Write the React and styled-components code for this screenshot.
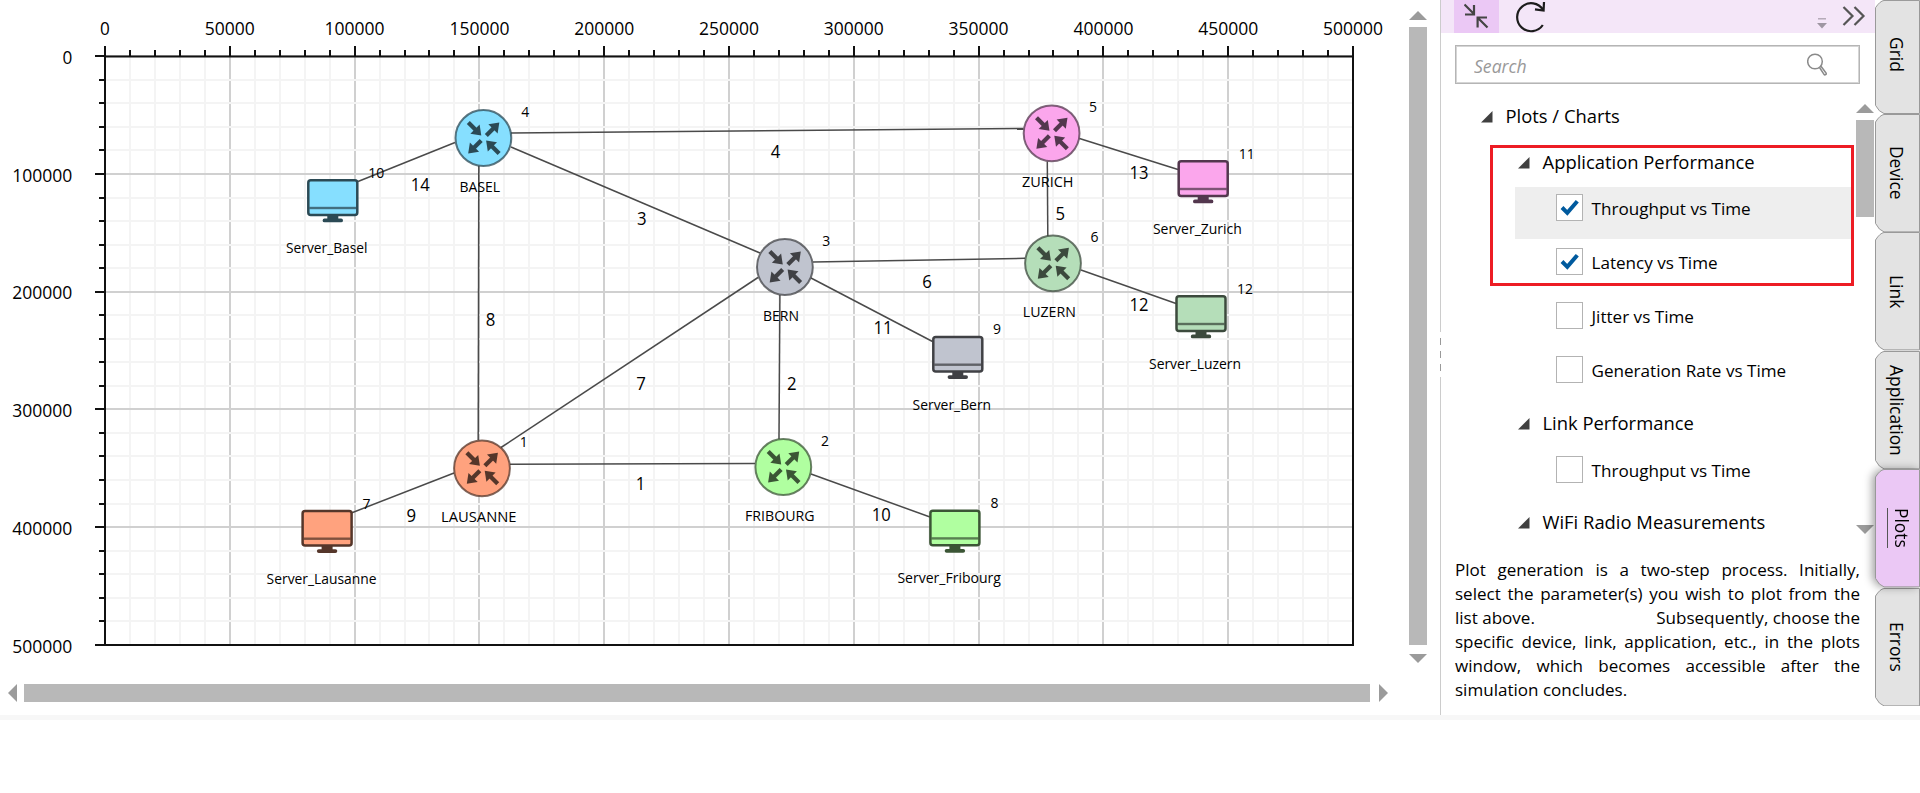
import { useState } from 'react';
import styled, { createGlobalStyle } from 'styled-components';

const GRID = { left: 105, top: 56.5, right: 1353, bottom: 645 };

const ROUTERS = [
  { name: 'BASEL', id: 4, x: 483.4, y: 138, color: '#86dfff', dark: '#2b4a55', label: [459.6, 192, 40.5], idPos: [525.3, 116.7] },
  { name: 'ZURICH', id: 5, x: 1051.6, y: 133.3, color: '#fba6ec', dark: '#53374e', label: [1022, 186.7, 51.5], idPos: [1093, 111.7] },
  { name: 'BERN', id: 3, x: 784.9, y: 267, color: '#c0c4cf', dark: '#404145', label: [763, 321, 36], idPos: [826.3, 245.7] },
  { name: 'LUZERN', id: 6, x: 1053, y: 263.3, color: '#b5deb9', dark: '#3c4a3d', label: [1022.8, 316.5, 53], idPos: [1094.5, 241.7] },
  { name: 'LAUSANNE', id: 1, x: 482, y: 468.3, color: '#ffa27e', dark: '#55362a', label: [441, 522, 75.5], idPos: [523.7, 446.7] },
  { name: 'FRIBOURG', id: 2, x: 783.3, y: 467, color: '#b0ffa0', dark: '#3b5535', label: [745, 521, 69.5], idPos: [825, 446] },
];

const SERVERS = [
  { name: 'Server_Basel', id: 10, x: 307.3, y: 179.3, color: '#86dfff', dark: '#2b4a55', label: [286, 253.3, 81.5], idPos: [376.3, 178] },
  { name: 'Server_Zurich', id: 11, x: 1177.7, y: 160.3, color: '#fba6ec', dark: '#53374e', label: [1152.9, 234.3, 89], idPos: [1246.8, 158.7] },
  { name: 'Server_Luzern', id: 12, x: 1175.5, y: 295.3, color: '#b5deb9', dark: '#3c4a3d', label: [1149, 369.3, 92], idPos: [1245, 293.5] },
  { name: 'Server_Bern', id: 9, x: 932.3, y: 336, color: '#c0c4cf', dark: '#404145', label: [912.6, 410, 78.5], idPos: [997, 334.3] },
  { name: 'Server_Lausanne', id: 7, x: 301.6, y: 510, color: '#ffa27e', dark: '#55362a', label: [266.6, 584.3, 110], idPos: [366.5, 508.7] },
  { name: 'Server_Fribourg', id: 8, x: 929.4, y: 509.7, color: '#b0ffa0', dark: '#3b5535', label: [897.4, 583, 103.6], idPos: [994.6, 507.7] },
];

const LINKS = [
  { id: 14, line: [455, 142.5, 358, 181.5], at: [420.3, 191] },
  { id: 4, line: [511, 133, 1023.5, 128.5], at: [775.5, 158] },
  { id: 3, line: [511, 147, 760, 253], at: [641.8, 225] },
  { id: 8, line: [478.8, 166, 478.2, 440], at: [490.6, 325.7] },
  { id: 7, line: [501, 447.5, 758, 277.5], at: [641, 389.7] },
  { id: 1, line: [510, 464.3, 755, 463.5], at: [640.6, 489.7] },
  { id: 9, line: [454, 473, 352, 512.7], at: [411.4, 521.7] },
  { id: 2, line: [779.9, 295, 779, 439], at: [791.8, 390] },
  { id: 6, line: [813, 262, 1025, 258.3], at: [927, 288] },
  { id: 11, line: [811, 278, 932.5, 341.5], at: [883, 334.3] },
  { id: 10, line: [811, 474, 930, 517], at: [881.2, 521] },
  { id: 12, line: [1081, 270, 1176, 303.5], at: [1139, 311.3] },
  { id: 13, line: [1079.5, 138.5, 1178, 169.5], at: [1139, 178.7] },
  { id: 5, line: [1047.3, 161.5, 1047.8, 236], at: [1060.3, 220.3] },
];

const TABS = ['Grid', 'Device', 'Link', 'Application', 'Plots', 'Errors'];

const range = (n) => Array.from({ length: n }, (_, i) => i);

function GridLines() {
  const dx = (GRID.right - GRID.left) / 50;
  const dy = (GRID.bottom - GRID.top) / 25;
  const xs = range(51).map((i) => ({ i, p: Math.round(GRID.left + i * dx), major: i % 5 === 0 }));
  const ys = range(26).map((i) => ({ i, p: Math.floor(GRID.top + i * dy + 0.3), major: i % 5 === 0 }));
  const byWeight = (a, b) => a.major - b.major;

  return (
    <g>
      {[...xs].sort(byWeight).map(({ i, p, major }) => (
        <line key={`x${i}`} x1={p} x2={p} y1={GRID.top} y2={GRID.bottom} stroke={major ? '#d0d0d0' : '#f4f4f4'} strokeWidth="2" />
      ))}
      {[...ys].sort(byWeight).map(({ i, p, major }) => (
        <line key={`y${i}`} x1={GRID.left} x2={GRID.right} y1={p} y2={p} stroke={major ? '#d0d0d0' : '#f4f4f4'} strokeWidth="2" />
      ))}
      {xs.map(({ i, p, major }) => (
        <line key={`tx${i}`} x1={p} x2={p} y1={major ? 46 : 50} y2={56} stroke="#111" strokeWidth="2" />
      ))}
      {ys.map(({ i, p, major }) => (
        <line key={`ty${i}`} x1={major ? 95 : 99} x2={104} y1={p} y2={p} stroke="#111" strokeWidth="2" />
      ))}
      <rect x={GRID.left} y={GRID.top} width={GRID.right - GRID.left} height={GRID.bottom - GRID.top} fill="none" stroke="#111" strokeWidth="2" />
      {range(11).map((i) => (
        <AxisText key={i} x={GRID.left + i * 124.8} y="34.7" textAnchor="middle" textLength={i === 0 ? 9.8 : i === 1 ? 50 : 60} lengthAdjust="spacingAndGlyphs">
          {i * 50000}
        </AxisText>
      ))}
      {range(6).map((i) => (
        <AxisText key={i} x="72.3" y={63.7 + i * 117.8} textAnchor="end" textLength={i === 0 ? 9.8 : 60} lengthAdjust="spacingAndGlyphs">
          {i * 100000}
        </AxisText>
      ))}
    </g>
  );
}

function Arrow({ x, y, turn }) {
  return (
    <g transform={`translate(${x} ${y}) rotate(${turn})`}>
      <path d="M.3 .3 L-1.4 -10.6 L-10.6 -1.4 Z" />
      <path d="M-11.2 -14.2 L-3.2 -6.2 L-6.2 -3.2 L-14.2 -11.2 Z" />
    </g>
  );
}

function Router({ x, y, color, dark }) {
  return (
    <g transform={`translate(${x} ${y})`}>
      <circle r="27.9" fill={color} stroke={dark} strokeOpacity="0.75" strokeWidth="2" />
      <g fill={dark}>
        <Arrow x={-2.4} y={-2.8} turn={0} />
        <Arrow x={15.6} y={-15.2} turn={-90} />
        <Arrow x={-14.9} y={15.2} turn={90} />
        <Arrow x={3} y={2.8} turn={180} />
      </g>
    </g>
  );
}

function Monitor({ x, y, color, dark }) {
  return (
    <g transform={`translate(${x} ${y})`}>
      <rect x="1" y="1" width="49" height="34.6" rx="2.5" fill={color} stroke={dark} strokeWidth="2.5" />
      <rect x="2" y="27.5" width="47" height="2.4" fill={dark} opacity="0.75" />
      <path d="M20 36 H31 V39.2 H33.8 A1.9 1.9 0 0 1 33.8 43 H17.2 A1.9 1.9 0 0 1 17.2 39.2 H20 Z" fill={dark} />
    </g>
  );
}

function NodeLabels({ name, id, label, idPos }) {
  return (
    <g>
      <NodeText x={label[0]} y={label[1]} textLength={label[2]} lengthAdjust="spacingAndGlyphs">{name}</NodeText>
      <NodeText x={idPos[0]} y={idPos[1]} textAnchor="middle" textLength={id > 9 ? 16 : 8} lengthAdjust="spacingAndGlyphs">{id}</NodeText>
    </g>
  );
}

function Topology() {
  return (
    <Diagram width="1409" height="684" viewBox="0 0 1409 684">
      <GridLines />
      {LINKS.map(({ id, line }) => (
        <line key={id} x1={line[0]} y1={line[1]} x2={line[2]} y2={line[3]} stroke="#4a4a4a" strokeWidth="1.5" />
      ))}
      {LINKS.map(({ id, at }) => (
        <LinkText key={id} x={at[0]} y={at[1]} textAnchor="middle" textLength={id > 9 ? 19 : 9.6} lengthAdjust="spacingAndGlyphs">{id}</LinkText>
      ))}
      {ROUTERS.map((node) => <Router key={node.id} {...node} />)}
      {SERVERS.map((node) => <Monitor key={node.id} {...node} />)}
      {[...ROUTERS, ...SERVERS].map((node) => <NodeLabels key={node.id} {...node} />)}
    </Diagram>
  );
}

function Leaf({ label, checked, selected }) {
  const [isChecked, setIsChecked] = useState(Boolean(checked));

  return (
    <LeafRow $selected={selected}>
      <CheckBox type="button" onClick={() => setIsChecked(!isChecked)}>
        {isChecked && (
          <svg width="20" height="18" viewBox="0 0 20 18">
            <path d="M2 8.5 L7.3 13.8 L17.3 2.2" fill="none" stroke="#005a9e" strokeWidth="4" />
          </svg>
        )}
      </CheckBox>
      <LeafText>{label}</LeafText>
    </LeafRow>
  );
}

function Heading({ label, height, top, root }) {
  return (
    <HeadingRow $height={height} $top={top} $root={root}>
      <Expander width="12" height="12" viewBox="0 0 12 12">
        <path d="M11.5 0 V11.5 H0 Z" fill="#404040" />
      </Expander>
      {label}
    </HeadingRow>
  );
}

function ArrowHead({ dir }) {
  const points = { up: '0,9 9,0 18,9', down: '0,0 9,9 18,0', left: '9,0 0,9 9,18', right: '0,0 9,9 0,18' }[dir];
  const vertical = dir === 'up' || dir === 'down';
  return (
    <svg width={vertical ? 18 : 9} height={vertical ? 9 : 18}>
      <polygon points={points} fill="#9b9b9b" />
    </svg>
  );
}

export default function App() {
  const [active, setActive] = useState('Plots');

  return (
    <>
      <GlobalStyle />
      <Workspace>
        <CanvasPane>
          <CanvasRow>
            <Topology />
            <VerticalBar>
              <ArrowHead dir="up" />
              <Thumb />
              <ArrowHead dir="down" />
            </VerticalBar>
          </CanvasRow>
          <HorizontalBar>
            <ArrowHead dir="left" />
            <Thumb />
            <ArrowHead dir="right" />
          </HorizontalBar>
        </CanvasPane>
        <Splitter>
          <SplitLine $height={332} />
          <Grip />
          <Grip />
          <Grip />
          <SplitLine />
        </Splitter>
        <Panel>
          <Toolbar>
            <ToolButton $active>
              <svg width="25" height="26" viewBox="0 0 25 26" fill="none" stroke="#444" strokeWidth="2.2">
                <path d="M.5 1.5 L10 11 M10 2 V11.5 H1" />
                <path d="M23.5 24.5 L14 15 M13.6 24.5 V14.5 H23" />
              </svg>
            </ToolButton>
            <ToolButton>
              <svg width="30" height="32" viewBox="0 0 30 32" fill="none" stroke="#1c1c1c" strokeWidth="2.2">
                <path d="M26.8 24 A14 14 0 1 1 27 8.8" />
                <path d="M19 8.4 L27.6 9.6 L28 1" />
              </svg>
            </ToolButton>
            <ToolbarEnd>
              <svg width="10" height="11" viewBox="0 0 10 11">
                <path d="M1 .8 H9" stroke="#aaa1ae" strokeWidth="1.3" />
                <path d="M0 5 H10 L5 10.5 Z" fill="#9e96a2" />
              </svg>
              <svg width="24" height="20" viewBox="0 0 24 20" fill="none" stroke="#555" strokeWidth="2.2">
                <path d="M1.5 1 L10.5 10 L1.5 19 M12.5 1 L21.5 10 L12.5 19" />
              </svg>
            </ToolbarEnd>
          </Toolbar>
          <SearchBox>
            <SearchInput placeholder="Search" />
            <svg width="20" height="24" viewBox="0 0 20 24" fill="none" stroke="#8a8a8a">
              <circle cx="8" cy="8.5" r="7.3" strokeWidth="1.5" />
              <path d="M12.5 14.5 L17 21.3 A1 1 0 0 0 19 20 L14 13.3" strokeWidth="1.5" />
            </svg>
          </SearchBox>
          <TreeArea>
            <Tree>
              <Heading root label="Plots / Charts" height={46} top={11} />
              <Marked>
                <Heading label="Application Performance" height={48} top={11} />
                <Leaf label="Throughput vs Time" checked selected />
                <Leaf label="Latency vs Time" checked />
              </Marked>
              <Leaf label="Jitter vs Time" />
              <Leaf label="Generation Rate vs Time" />
              <Heading label="Link Performance" height={46} top={8} />
              <Leaf label="Throughput vs Time" />
              <Heading label="WiFi Radio Measurements" height={38} top={7} />
            </Tree>
            <TreeBar>
              <ArrowHead dir="up" />
              <TreeThumb />
              <ArrowHead dir="down" />
            </TreeBar>
          </TreeArea>
          <Help>
            <HelpLine>Plot generation is a two-step process. Initially,</HelpLine>
            <HelpLine>select the parameter(s) you wish to plot from the</HelpLine>
            <HelpLine $split>
              <span>list above.</span>
              <span>Subsequently, choose the</span>
            </HelpLine>
            <HelpLine>specific device, link, application, etc., in the plots</HelpLine>
            <HelpLine>window, which becomes accessible after the</HelpLine>
            <HelpLine $last>simulation concludes.</HelpLine>
          </Help>
        </Panel>
        <TabStrip>
          {TABS.map((tab) => (
            <Tab key={tab} $active={tab === active} $first={tab === 'Grid'} onClick={() => setActive(tab)}>
              <TabShape viewBox="0 0 45 118" preserveAspectRatio="none">
                <path d="M44.5 .5 H9 Q5 1 .5 8 V109 Q4 116 9 117.5 H44.5 Z" />
              </TabShape>
              <TabText $active={tab === active} $first={tab === 'Grid'}>{tab}</TabText>
            </Tab>
          ))}
        </TabStrip>
      </Workspace>
      <StatusEdge />
    </>
  );
}

const GlobalStyle = createGlobalStyle`
  *,
  *::after {
    box-sizing: border-box;
  }

  body {
    margin: 0;
    background: #fff;
    color: #000;
    font-family: 'Open Sans', 'Noto Sans', sans-serif;
    overflow: hidden;
  }

  svg {
    display: block;
    flex-shrink: 0;
  }
`;

const Workspace = styled.div`
  display: flex;
  width: 1920px;
  height: 715px;
`;

const CanvasPane = styled.main`
  display: flex;
  flex-direction: column;
  width: 1440px;
`;

const CanvasRow = styled.div`
  display: flex;
  height: 684px;
`;

const Diagram = styled.svg`
  width: 1409px;
  height: 684px;
`;

const AxisText = styled.text`
  font-size: 17.6px;
  fill: #000;
`;

const LinkText = styled.text`
  font-size: 17.4px;
  fill: #000;
`;

const NodeText = styled.text`
  font-size: 15.2px;
  fill: #000;
`;

const VerticalBar = styled.div`
  display: flex;
  flex-direction: column;
  width: 18px;
  height: 663px;
  padding-top: 11px;
`;

const HorizontalBar = styled.div`
  display: flex;
  width: 1388px;
  height: 18px;
  padding-left: 8px;
`;

const Thumb = styled.div`
  flex: 1;
  background: #b8b8b8;

  ${VerticalBar} & {
    margin: 7px 0 9px;
  }

  ${HorizontalBar} & {
    margin: 0 9px 0 7px;
  }
`;

const Splitter = styled.div`
  display: flex;
  flex-direction: column;
  gap: 6px;
  width: 1px;
`;

const SplitLine = styled.div`
  ${({ $height }) => ($height ? `height: ${$height}px;` : 'flex: 1;')}
  background: #ccc;
`;

const Grip = styled.div`
  height: 7px;
  background: #999;
`;

const Panel = styled.aside`
  display: flex;
  flex-direction: column;
  width: 434px;
`;

const Toolbar = styled.div`
  display: flex;
  height: 33px;
  padding-left: 13px;
  background: #f4e6f8;
`;

const ToolButton = styled.div`
  display: flex;
  justify-content: center;
  width: ${({ $active }) => ($active ? '45px' : '64px')};
  padding-top: ${({ $active }) => ($active ? '3px' : '1px')};
  background: ${({ $active }) => ($active ? '#ebc8f5' : 'transparent')};
`;

const ToolbarEnd = styled.div`
  display: flex;
  align-items: flex-start;
  gap: 15px;
  margin-left: auto;
  padding: 6px 9px 0 0;

  > svg:first-child {
    margin-top: 12px;
  }
`;

const SearchBox = styled.label`
  display: flex;
  align-items: center;
  width: 405px;
  height: 39px;
  margin: 12px 0 0 14px;
  padding: 0 32px 0 18px;
  border: 1.5px solid #b5b5b5;
  outline: 0.5px solid #d5d5d5;
  outline-offset: -2px;
`;

const SearchInput = styled.input`
  flex: 1;
  padding: 2px 0 0;
  border: 0;
  outline: 0;
  font: italic 17.6px 'Open Sans', 'Noto Sans', sans-serif;

  &::placeholder {
    color: #999;
  }
`;

const TreeArea = styled.div`
  display: flex;
  height: 455px;
  padding-top: 9px;
`;

const Tree = styled.div`
  width: 415px;
`;

const HeadingRow = styled.div`
  display: flex;
  height: ${({ $height }) => $height}px;
  padding-top: ${({ $top }) => $top}px;
  padding-left: ${({ $root }) => ($root ? '39.5px' : '76.5px')};
  font-size: 18.4px;
  line-height: 24px;
  white-space: nowrap;
`;

const Expander = styled.svg`
  margin: 7px 13px 0 0;
`;

const LeafRow = styled.div`
  display: flex;
  width: 336px;
  height: 52px;
  margin: 0 0 2px 74px;
  padding: 7px 0 0 41px;
  background: ${({ $selected }) => ($selected ? '#eee' : 'transparent')};
`;

const CheckBox = styled.button`
  display: flex;
  justify-content: center;
  align-items: center;
  width: 27px;
  height: 27px;
  padding: 0;
  border: 1.5px solid #b3b3b3;
  background: #fff;
`;

const LeafText = styled.span`
  padding: 3px 0 0 8.5px;
  font-size: 17.1px;
  line-height: 24px;
  white-space: nowrap;
`;

const Marked = styled.div`
  position: relative;

  &::after {
    content: '';
    position: absolute;
    top: 6px;
    left: 49px;
    width: 364px;
    height: 141px;
    border: 3px solid #ed1c24;
    pointer-events: none;
  }
`;

const TreeBar = styled.div`
  display: flex;
  flex-direction: column;
  justify-content: space-between;
  width: 18px;
  height: 441px;
  padding-top: 11px;
`;

const TreeThumb = styled.div`
  height: 97px;
  margin: 7px 0 auto;
  background: #b8b8b8;
`;

const Help = styled.div`
  width: 405px;
  margin: 19px 0 0 14px;
  font-size: 17.05px;
  line-height: 23.9px;
`;

const HelpLine = styled.div`
  display: ${({ $split }) => ($split ? 'flex' : 'block')};
  justify-content: space-between;
  text-align: ${({ $last }) => ($last ? 'left' : 'justify')};
  text-align-last: ${({ $last }) => ($last ? 'left' : 'justify')};
  white-space: nowrap;
`;

const TabStrip = styled.nav`
  display: flex;
  flex-direction: column;
  width: 45px;
`;

const Tab = styled.div`
  display: grid;
  height: ${({ $first }) => ($first ? '114px' : '118.4px')};
  filter: ${({ $active }) => ($active ? 'drop-shadow(-3px 0 4px rgba(0, 0, 0, 0.35))' : 'none')};

  > * {
    grid-area: 1 / 1;
  }

  path {
    fill: ${({ $active }) => ($active ? '#ebc8f5' : '#e3e3e3')};
    stroke: #999;
    vector-effect: non-scaling-stroke;
  }
`;

const TabShape = styled.svg`
  width: 45px;
  height: 100%;
`;

const TabText = styled.span`
  place-self: center;
  margin-left: ${({ $active }) => ($active ? '5px' : '0')};
  margin-bottom: ${({ $first }) => ($first ? '6px' : '0')};
  padding-right: ${({ $active }) => ($active ? '0' : '2px')};
  padding-left: ${({ $active }) => ($active ? '3px' : '0')};
  writing-mode: vertical-rl;
  font-size: 17.4px;
  line-height: 22px;
  border-left: ${({ $active }) => ($active ? '1px solid #555' : '0')};
`;

const StatusEdge = styled.div`
  height: 5px;
  background: #f7f7f7;
`;
